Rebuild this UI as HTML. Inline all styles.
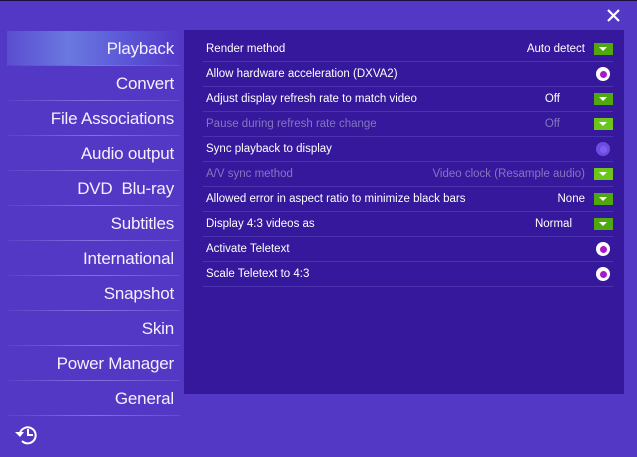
<!DOCTYPE html>
<html><head><style>
*{margin:0;padding:0;box-sizing:border-box}
body{width:637px;height:457px;background:#5337c5;font-family:"Segoe UI","Liberation Sans",sans-serif;position:relative;overflow:hidden;color:#fff}
.topline{position:absolute;left:0;top:0;width:637px;height:1px;background:#1a1040}
.side{position:absolute;left:0;top:31px;width:182px}
.item{position:absolute;right:8px;font-size:17px;height:35px;line-height:35px;text-align:right;white-space:nowrap;color:#f4f0ff;letter-spacing:-0.2px}
.sep{position:absolute;left:7px;width:173px;height:1px;background:linear-gradient(90deg,rgba(255,255,255,.05),rgba(200,180,255,.45),rgba(255,255,255,.1))}
.sel{position:absolute;left:7px;top:0;width:175px;height:34px;background:linear-gradient(90deg,#5a4dd0 0%,#6a78e0 35%,#5a55d6 70%,#5337c5 100%)}
.panel{position:absolute;left:184px;top:30px;width:440px;height:364px;background:#35189c}
.row{position:absolute;left:22px;width:407px;height:25px;font-size:11.5px;line-height:25px}
.row .l{position:absolute;left:0}
.row .v{position:absolute;right:28px}
.row .line{position:absolute;left:-3px;bottom:0;width:410px;height:1px;background:#4b33b0}
.dis{color:#8576c0}
.btn{position:absolute;right:0;top:6px;width:19px;height:12px;background:#4fa80f}
.btn.d{background:#6cc51a}
.btn:after{content:"";position:absolute;left:5px;top:4px;border-left:4.5px solid transparent;border-right:4.5px solid transparent;border-top:4px solid #fff}
.rad{position:absolute;right:3px;top:5px;width:14px;height:14px;border-radius:50%;background:#fff}
.rad:after{content:"";position:absolute;left:3.5px;top:3.5px;width:7px;height:7px;border-radius:50%;background:#a817c8}
.rad.d{background:#6b4ee0}
.rad.d:after{background:#7e5ef0}
</style></head><body>
<div class="topline"></div>
<svg style="position:absolute;left:606px;top:8px" width="15" height="15"><path d="M2 2L13 13M13 2L2 13" stroke="#fff" stroke-width="2.2"/></svg>
<div class="side">
<div class="sel"></div>
<div class="item" style="top:0">Playback</div>
<div class="sep" style="top:34px"></div>
<div class="item" style="top:35px">Convert</div>
<div class="sep" style="top:69px"></div>
<div class="item" style="top:70px">File Associations</div>
<div class="sep" style="top:104px"></div>
<div class="item" style="top:105px">Audio output</div>
<div class="sep" style="top:139px"></div>
<div class="item" style="top:140px">DVD&nbsp;&nbsp;Blu-ray</div>
<div class="sep" style="top:174px"></div>
<div class="item" style="top:175px">Subtitles</div>
<div class="sep" style="top:209px"></div>
<div class="item" style="top:210px">International</div>
<div class="sep" style="top:244px"></div>
<div class="item" style="top:245px">Snapshot</div>
<div class="sep" style="top:279px"></div>
<div class="item" style="top:280px">Skin</div>
<div class="sep" style="top:314px"></div>
<div class="item" style="top:315px">Power Manager</div>
<div class="sep" style="top:349px"></div>
<div class="item" style="top:350px">General</div>
<div class="sep" style="top:384px"></div>
</div>
<svg style="position:absolute;left:13px;top:424px" width="26" height="22" viewBox="0 0 26 22"><path d="M7 9A8 8 0 1 1 9 17" fill="none" stroke="#fff" stroke-width="2"/><path d="M2 8L7 13L11 8Z" fill="#fff"/><path d="M15 5V11H20" fill="none" stroke="#fff" stroke-width="2"/></svg>
<div class="panel">
<div class="row" style="top:7px"><span class="l">Render method</span><span class="v">Auto detect</span><div class="btn"></div><div class="line"></div></div>
<div class="row" style="top:32px"><span class="l">Allow hardware acceleration (DXVA2)</span><div class="rad"></div><div class="line"></div></div>
<div class="row" style="top:57px"><span class="l">Adjust display refresh rate to match video</span><span class="v" style="right:53px">Off</span><div class="btn"></div><div class="line"></div></div>
<div class="row dis" style="top:82px"><span class="l">Pause during refresh rate change</span><span class="v" style="right:53px">Off</span><div class="btn d"></div><div class="line"></div></div>
<div class="row" style="top:107px"><span class="l">Sync playback to display</span><div class="rad d"></div><div class="line"></div></div>
<div class="row dis" style="top:132px"><span class="l">A/V sync method</span><span class="v">Video clock (Resample audio)</span><div class="btn d"></div><div class="line"></div></div>
<div class="row" style="top:157px"><span class="l">Allowed error in aspect ratio to minimize black bars</span><span class="v">None</span><div class="btn"></div><div class="line"></div></div>
<div class="row" style="top:182px"><span class="l">Display 4:3 videos as</span><span class="v" style="right:41px">Normal</span><div class="btn"></div><div class="line"></div></div>
<div class="row" style="top:207px"><span class="l">Activate Teletext</span><div class="rad"></div><div class="line"></div></div>
<div class="row" style="top:232px"><span class="l">Scale Teletext to 4:3</span><div class="rad"></div><div class="line"></div></div>
</div>
</body></html>
